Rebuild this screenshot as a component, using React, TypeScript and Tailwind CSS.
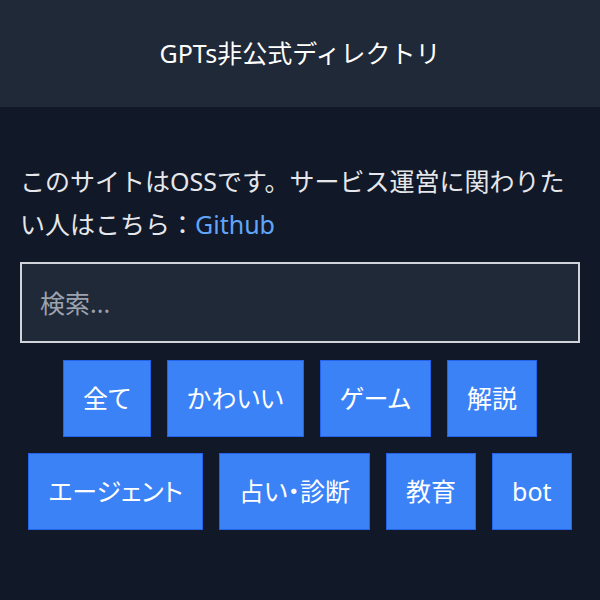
import React, { useState } from 'react';

const CATEGORIES = ['全て', 'かわいい', 'ゲーム', '解説', 'エージェント', '占い・診断', '教育', 'bot'];

const App: React.FC = () => {
  const [query, setQuery] = useState('');

  return (
    <div
      className="min-h-[600px] bg-[#111827] text-[#e5e7eb]"
      style={{ fontFamily: '"Noto Sans", "Noto Sans CJK JP", sans-serif' }}
    >
      <header className="h-[107px] bg-[#1f2937] flex items-center justify-center">
        <h1 className="text-[25px] text-white leading-none">GPTs非公式ディレクトリ</h1>
      </header>

      <main className="px-5 pt-[53px]">
        <p className="text-[25px] leading-[43px]">
          このサイトはOSSです。サービス運営に関わりたい人はこちら：<a href="#" className="text-[#60a5fa]">Github</a>
        </p>

        <input
          value={query}
          onChange={(e) => setQuery(e.target.value)}
          placeholder="検索..."
          className="mt-4 w-full h-[81px] px-[18px] bg-[#1f2937] border-2 border-[#d1d5db] text-[25px] text-white placeholder:text-[#9ca3af] outline-none"
        />

        {/* Category buttons */}
        <div className="mt-[17px] flex flex-wrap justify-center gap-4">
          {CATEGORIES.map((c) => (
            <button
              key={c}
              className="h-[77px] px-[19px] bg-[#3b82f6] border border-[#2563eb] text-white text-[25px] [font-feature-settings:'palt']"
            >
              {c}
            </button>
          ))}
        </div>
      </main>
    </div>
  );
};

export default App;
